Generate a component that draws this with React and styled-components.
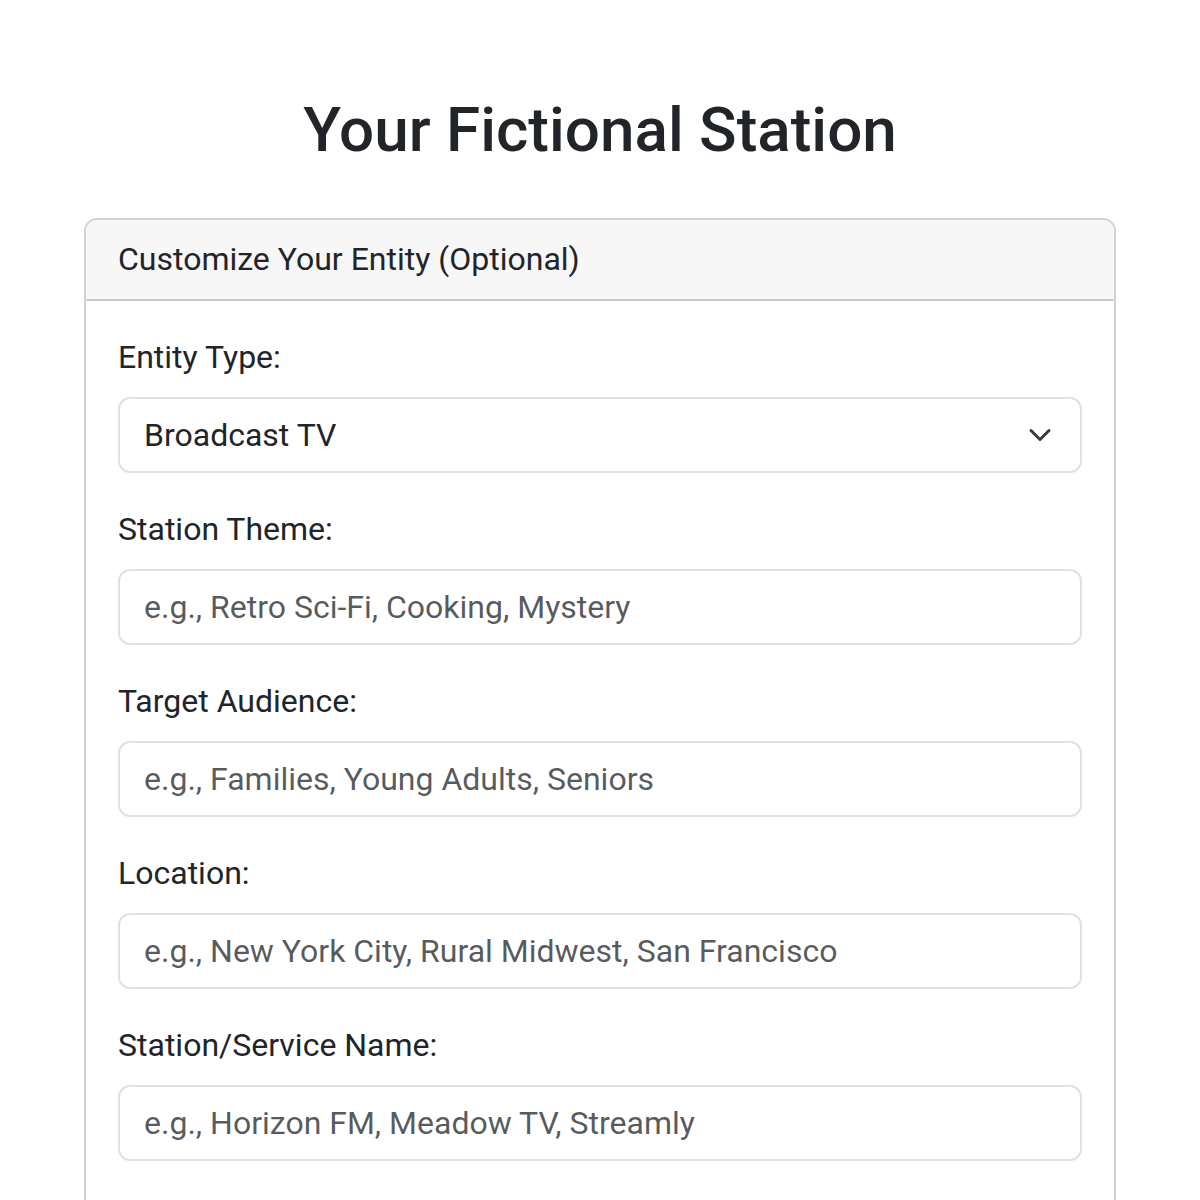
import React, { useState } from "react";
import styled, { createGlobalStyle } from "styled-components";

const GlobalStyle = createGlobalStyle`
  html, body {
    margin: 0;
    padding: 0;
    background: #ffffff;
  }
  body {
    font-family: Roboto, "Liberation Sans", Arial, sans-serif;
    color: #212529;
    -webkit-font-smoothing: antialiased;
  }
  *, *::before, *::after {
    box-sizing: border-box;
  }
`;

const Page = styled.div`
  padding: 93px 84px 0;
`;

const Title = styled.h1`
  margin: 0 0 51px;
  font-size: 62px;
  font-weight: 500;
  line-height: 1.2;
  text-align: center;
  color: #212529;
`;

const Card = styled.div`
  border: 2px solid rgba(0, 0, 0, 0.175);
  border-radius: 13px;
  background: #fff;
  overflow: hidden;
`;

const CardHeader = styled.div`
  padding: 15px 32px 16px;
  font-size: 32px;
  line-height: 48px;
  background: #f7f7f7;
  border-bottom: 2px solid rgba(0, 0, 0, 0.175);
`;

const CardBody = styled.div`
  padding: 32px;
`;

const Field = styled.div`
  margin-bottom: 32px;
`;

const Label = styled.label`
  display: block;
  margin-bottom: 16px;
  font-size: 32px;
  line-height: 48px;
`;

const controlBase = `
  display: block;
  width: 100%;
  height: 76px;
  padding: 0 24px;
  font-family: Roboto, "Liberation Sans", Arial, sans-serif;
  font-size: 32px;
  line-height: 48px;
  color: #212529;
  background-color: #fff;
  border: 2px solid #dee2e6;
  border-radius: 12px;
  outline: none;
  appearance: none;
`;

const Input = styled.input`
  ${controlBase}
  &::placeholder {
    color: rgba(33, 37, 41, 0.75);
    opacity: 1;
  }
`;

const SelectWrap = styled.div`
  position: relative;
`;

const Select = styled.select`
  ${controlBase}
  padding-right: 72px;
`;

const Chevron = styled.svg`
  position: absolute;
  right: 30px;
  top: 50%;
  width: 24px;
  height: 24px;
  margin-top: -12px;
  pointer-events: none;
`;

const fields = [
  { id: "theme", label: "Station Theme:", placeholder: "e.g., Retro Sci-Fi, Cooking, Mystery" },
  { id: "audience", label: "Target Audience:", placeholder: "e.g., Families, Young Adults, Seniors" },
  { id: "location", label: "Location:", placeholder: "e.g., New York City, Rural Midwest, San Francisco" },
  { id: "name", label: "Station/Service Name:", placeholder: "e.g., Horizon FM, Meadow TV, Streamly" },
];

export default function App() {
  const [entityType, setEntityType] = useState("Broadcast TV");
  const [values, setValues] = useState({});

  return (
    <Page>
      <GlobalStyle />
      <Title>Your Fictional Station</Title>
      <Card>
        <CardHeader>Customize Your Entity (Optional)</CardHeader>
        <CardBody>
          <Field>
            <Label htmlFor="entityType">Entity Type:</Label>
            <SelectWrap>
              <Select
                id="entityType"
                value={entityType}
                onChange={(e) => setEntityType(e.target.value)}
              >
                <option>Broadcast TV</option>
                <option>Radio Station</option>
                <option>Streaming Service</option>
              </Select>
              <Chevron viewBox="0 0 16 16">
                <path
                  d="m2 5 6 6 6-6"
                  fill="none"
                  stroke="#343a40"
                  strokeWidth="2"
                  strokeLinecap="round"
                  strokeLinejoin="round"
                />
              </Chevron>
            </SelectWrap>
          </Field>
          {fields.map((f) => (
            <Field key={f.id}>
              <Label htmlFor={f.id}>{f.label}</Label>
              <Input
                id={f.id}
                type="text"
                placeholder={f.placeholder}
                value={values[f.id] || ""}
                onChange={(e) => setValues({ ...values, [f.id]: e.target.value })}
              />
            </Field>
          ))}
        </CardBody>
      </Card>
    </Page>
  );
}
